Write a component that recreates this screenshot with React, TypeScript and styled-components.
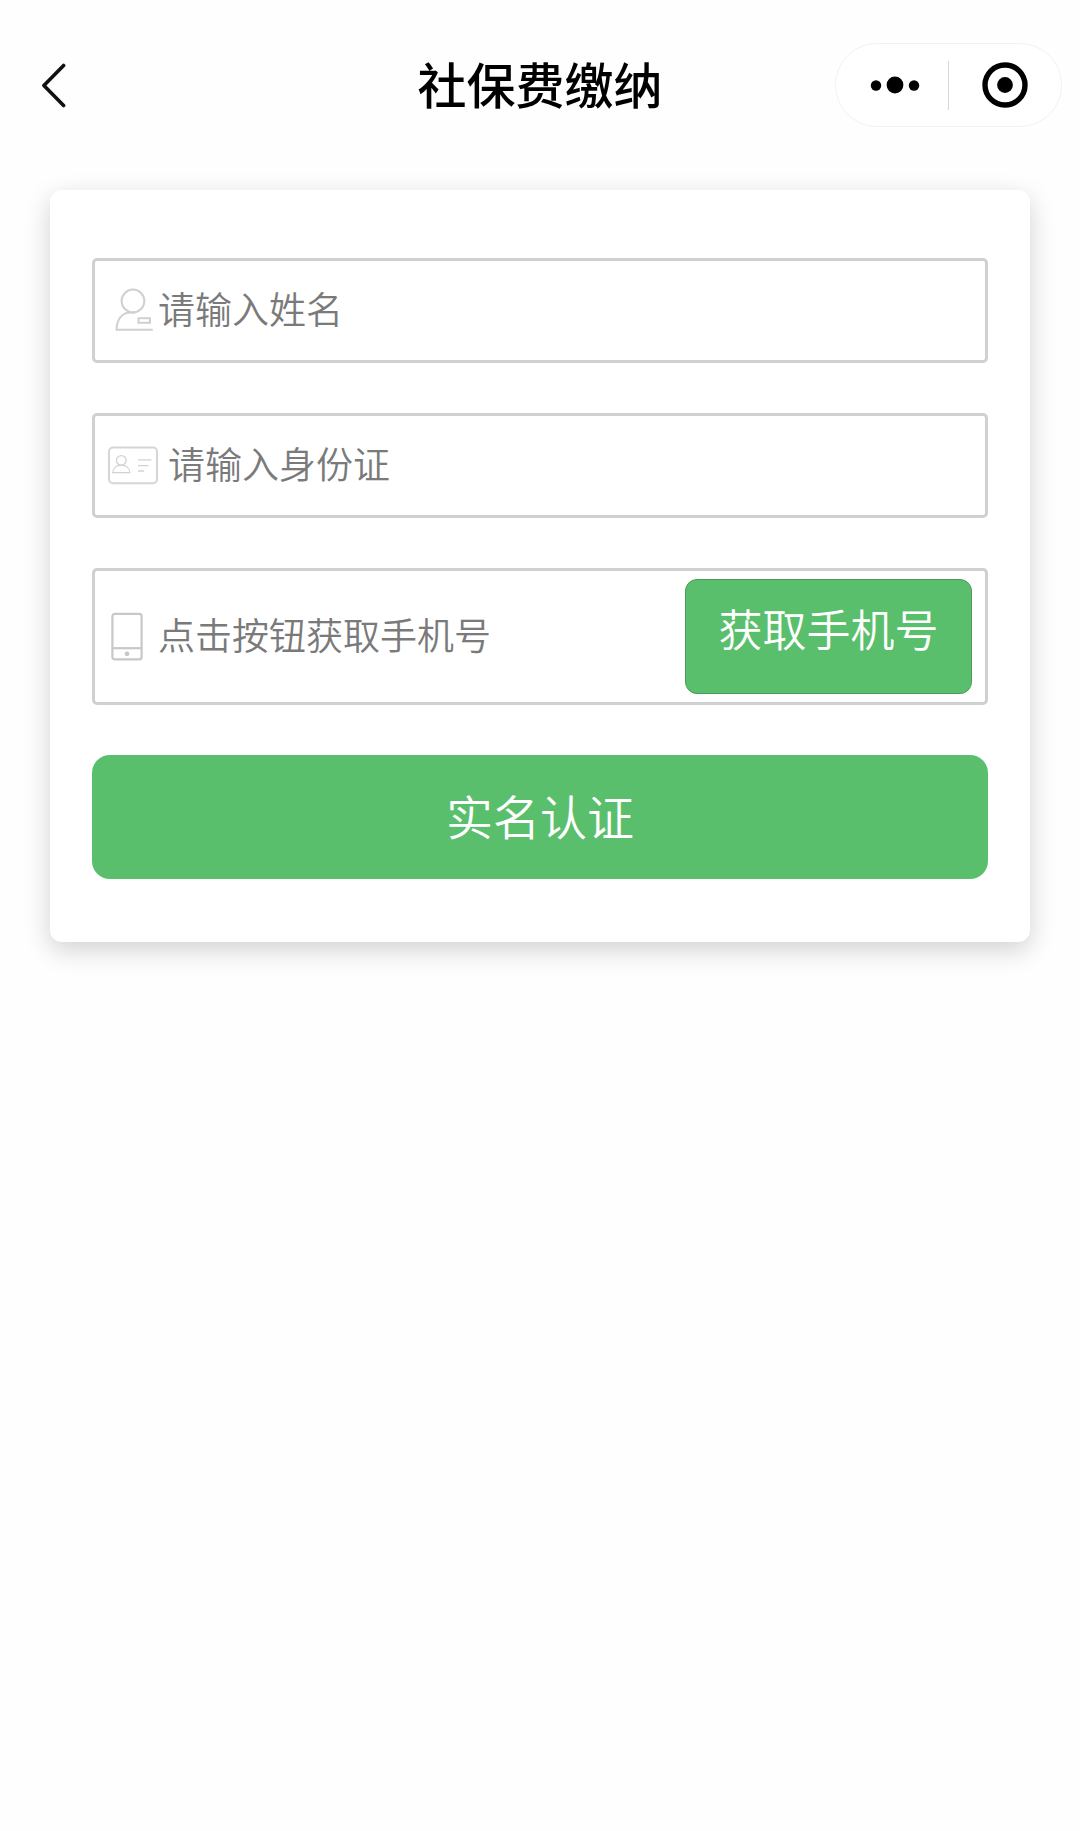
import React from 'react';
import styled, { createGlobalStyle } from 'styled-components';

const GlobalStyle = createGlobalStyle`
  * { box-sizing: border-box; }
  body {
    margin: 0;
    background: #fefefe;
    font-family: 'Noto Sans CJK SC', 'Liberation Sans', sans-serif;
  }
  button, input { font-family: inherit; margin: 0; }
`;

const Page = styled.div`
  min-height: 100vh;
`;

const Header = styled.header`
  display: grid;
  grid-template-columns: 1fr auto 1fr;
  align-items: center;
  height: 170px;
  padding: 0 18px;
`;

const IconButton = styled.button`
  display: flex;
  align-items: center;
  justify-content: center;
  padding: 0;
  border: 0;
  background: none;
  color: #000;
  cursor: pointer;
`;

const BackButton = styled(IconButton)`
  width: 72px;
  height: 72px;
`;

const Title = styled.h1`
  margin: 0;
  padding-bottom: 4px;
  font-size: 49px;
  line-height: 72px;
  font-weight: 500;
  color: #000;
`;

const Capsule = styled.div`
  display: grid;
  grid-template-columns: 1fr 1px 1fr;
  align-items: center;
  justify-self: end;
  width: 227px;
  height: 84px;
  border: 1px solid #f2f2f2;
  border-radius: 42px;
  background: #fff;
`;

const CapsuleButton = styled(IconButton)`
  height: 82px;
`;

const MoreButton = styled(CapsuleButton)`
  padding-left: 5px;
`;

const CapsuleDivider = styled.span`
  height: 49px;
  background: #d8d8d8;
`;

const Main = styled.main`
  padding: 20px 50px;
`;

const Card = styled.form`
  display: flex;
  flex-direction: column;
  gap: 50px;
  padding: 68px 42px 63px;
  border-radius: 12px;
  background: #fff;
  box-shadow: 0 8px 26px rgba(0, 0, 0, 0.18);
`;

const Field = styled.div<{ $tall?: boolean; $gap?: number }>`
  display: flex;
  align-items: center;
  gap: ${(p) => p.$gap ?? 0}px;
  height: ${(p) => (p.$tall ? 137 : 105)}px;
  padding: 0 13px;
  border: 3px solid #d0d0d0;
  border-radius: 5px;
`;

const FieldLabel = styled.label`
  display: flex;
  flex: none;
`;

const TextInput = styled.input`
  flex: 1;
  min-width: 0;
  height: 62px;
  padding: 0 0 6px;
  border: 0;
  outline: 0;
  background: transparent;
  font-size: 37px;
  line-height: 56px;
  font-weight: 350;
  color: #333;

  &::placeholder {
    color: #7a7a7a;
    opacity: 1;
  }
`;

const ActionButton = styled.button`
  background: #5abf6c;
  line-height: 64px;
  font-weight: 350;
  color: #fff;
  white-space: nowrap;
  cursor: pointer;
`;

const PhoneButton = styled(ActionButton)`
  flex: none;
  width: 287px;
  height: 115px;
  padding: 0 0 18px;
  border: 1px solid #4b9a5c;
  border-radius: 12px;
  font-size: 44px;
`;

const SubmitButton = styled(ActionButton)`
  height: 124px;
  padding: 0 0 4px;
  border: 0;
  border-radius: 18px;
  font-size: 47px;
`;

const BackIcon = () => (
  <svg width="24" height="48" viewBox="0 0 24 48" fill="none" stroke="#111" strokeWidth="3.6" strokeLinecap="round" strokeLinejoin="round" aria-hidden="true">
    <path d="M21.6 4.5 L1.9 24.5 L21.6 44.5" />
  </svg>
);

const MoreIcon = () => (
  <svg width="50" height="18" viewBox="0 0 50 18" aria-hidden="true">
    <circle cx="6" cy="9.5" r="5.2" />
    <circle cx="25" cy="9" r="8.4" />
    <circle cx="44" cy="9.5" r="5.2" />
  </svg>
);

const TargetIcon = () => (
  <svg width="46" height="46" viewBox="0 0 46 46" aria-hidden="true">
    <circle cx="23" cy="23" r="20" fill="none" stroke="#000" strokeWidth="5.4" />
    <circle cx="23" cy="23" r="7.9" />
  </svg>
);

const PersonIcon = () => (
  <svg width="50" height="50" viewBox="0 0 50 50" fill="none" stroke="#d0d0d0" strokeWidth="2" aria-hidden="true">
    <circle cx="25" cy="15" r="11.4" />
    <path d="M44.8 43.8H8.6C8.6 33.6 13.5 26.4 23 26.4H27" />
    <rect x="30.5" y="32.2" width="11.4" height="4.6" />
  </svg>
);

const IdCardIcon = () => (
  <svg width="50" height="50" viewBox="0 0 50 50" fill="none" stroke="#d6d6d6" aria-hidden="true">
    <rect x="1" y="6.6" width="48" height="35.6" rx="4" strokeWidth="2" />
    <g strokeWidth="1.3" stroke="#d2d2d2">
      <circle cx="13.3" cy="19.4" r="4.8" />
      <path d="M4.8 31.7C5 26.9 8.5 24.2 13.3 24.2S21.6 26.9 21.8 31.7Z" />
      <path d="M30 18.9H43.5M30 24.7H40.5M30 30H36" />
    </g>
  </svg>
);

const HandsetIcon = () => (
  <svg width="50" height="50" viewBox="0 0 50 50" fill="none" stroke="#c8c8c8" strokeWidth="2.2" aria-hidden="true">
    <rect x="4.4" y="1.8" width="29.2" height="45.6" rx="2.5" />
    <path d="M4.4 36.2H33.6" />
    <circle cx="19" cy="41.8" r="2.4" fill="#c8c8c8" stroke="none" />
  </svg>
);

export default function App() {
  return (
    <Page>
      <GlobalStyle />
      <Header>
        <BackButton type="button" aria-label="返回">
          <BackIcon />
        </BackButton>
        <Title>社保费缴纳</Title>
        <Capsule>
          <MoreButton type="button" aria-label="更多">
            <MoreIcon />
          </MoreButton>
          <CapsuleDivider />
          <CapsuleButton type="button" aria-label="关闭">
            <TargetIcon />
          </CapsuleButton>
        </Capsule>
      </Header>
      <Main>
        <Card onSubmit={(e: React.FormEvent) => e.preventDefault()}>
          <Field>
            <FieldLabel htmlFor="name" aria-label="姓名">
              <PersonIcon />
            </FieldLabel>
            <TextInput id="name" type="text" placeholder="请输入姓名" />
          </Field>
          <Field $gap={10}>
            <FieldLabel htmlFor="idcard" aria-label="身份证">
              <IdCardIcon />
            </FieldLabel>
            <TextInput id="idcard" type="text" placeholder="请输入身份证" />
          </Field>
          <Field $tall>
            <FieldLabel htmlFor="phone" aria-label="手机号">
              <HandsetIcon />
            </FieldLabel>
            <TextInput id="phone" type="tel" placeholder="点击按钮获取手机号" readOnly />
            <PhoneButton type="button">获取手机号</PhoneButton>
          </Field>
          <SubmitButton type="submit">实名认证</SubmitButton>
        </Card>
      </Main>
    </Page>
  );
}
